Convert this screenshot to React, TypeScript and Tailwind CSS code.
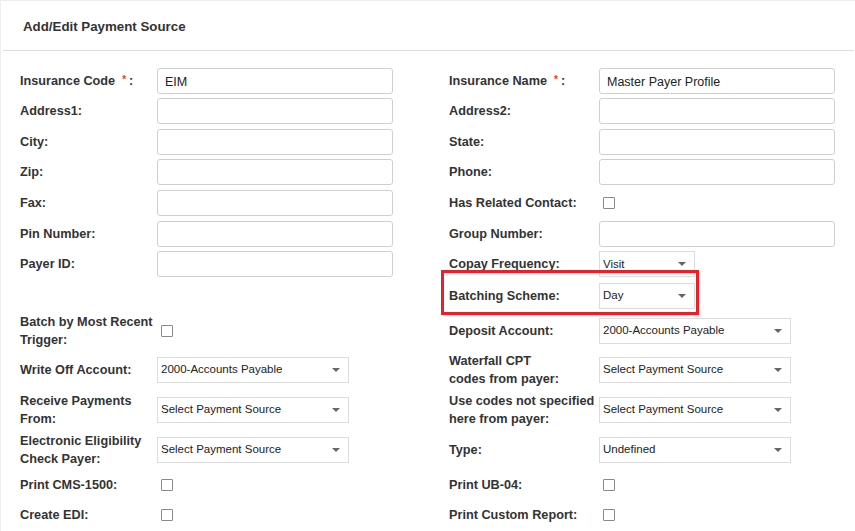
import React from "react";

const font = { fontFamily: '"Liberation Sans", Arial, sans-serif' };

const Label = ({ children, w }: { children: React.ReactNode; w: string }) => (
  <div className={`${w} shrink-0 text-[12.7px] font-bold leading-[18px] text-[#333]`}>{children}</div>
);

const Req = ({ text }: { text: string }) => (
  <>
    {text}
    <span className="ml-[7px] text-[10px] font-bold text-[#e53935] align-[2px]">*</span>
    <span className="ml-[3px]">:</span>
  </>
);

const TextInput = ({ value = "" }: { value?: string }) => (
  <div className="flex h-[26px] w-[236px] items-center rounded-[3px] border border-[#cfcfcf] bg-white px-[7px] pt-[4px] text-[12.5px] text-[#222]">
    {value}
  </div>
);

const Select = ({ value, w }: { value: string; w: string }) => (
  <div className={`${w} flex h-[26px] items-center justify-between border border-[#dcdcdc] bg-white pl-[3px] pr-[8px] text-[11.5px] text-[#222]`}>
    <span>{value}</span>
    <span className="h-0 w-0 border-l-[4px] border-r-[4px] border-t-[4px] border-l-transparent border-r-transparent border-t-[#666]" />
  </div>
);

const Check = () => (
  <div className="ml-[4px] h-[12px] w-[12px] rounded-[1px] border border-[#8a8a8a] bg-white" />
);

type Cell = { label: React.ReactNode; control?: React.ReactNode } | null;

const rows: { h: string; left: Cell; right: Cell; mark?: boolean }[] = [
  {
    h: "h-[31px]",
    left: { label: <Req text="Insurance Code" />, control: <TextInput value="EIM" /> },
    right: { label: <Req text="Insurance Name" />, control: <TextInput value="Master Payer Profile" /> },
  },
  {
    h: "h-[30.5px]",
    left: { label: "Address1:", control: <TextInput /> },
    right: { label: "Address2:", control: <TextInput /> },
  },
  {
    h: "h-[30.5px]",
    left: { label: "City:", control: <TextInput /> },
    right: { label: "State:", control: <TextInput /> },
  },
  {
    h: "h-[30.5px]",
    left: { label: "Zip:", control: <TextInput /> },
    right: { label: "Phone:", control: <TextInput /> },
  },
  {
    h: "h-[31px]",
    left: { label: "Fax:", control: <TextInput /> },
    right: { label: "Has Related Contact:", control: <Check /> },
  },
  {
    h: "h-[30.5px]",
    left: { label: "Pin Number:", control: <TextInput /> },
    right: { label: "Group Number:", control: <TextInput /> },
  },
  {
    h: "h-[30.5px]",
    left: { label: "Payer ID:", control: <TextInput /> },
    right: { label: "Copay Frequency:", control: <Select value="Visit" w="w-[96px]" /> },
  },
  {
    h: "h-[32.5px]",
    left: null,
    right: { label: "Batching Scheme:", control: <Select value="Day" w="w-[96px]" /> },
    mark: true,
  },
  {
    h: "h-[37.5px]",
    left: { label: <>Batch by Most Recent<br />Trigger:</>, control: <Check /> },
    right: { label: "Deposit Account:", control: <Select value="2000-Accounts Payable" w="w-[192px]" /> },
  },
  {
    h: "h-[40px]",
    left: { label: "Write Off Account:", control: <Select value="2000-Accounts Payable" w="w-[192px]" /> },
    right: { label: <>Waterfall CPT<br />codes from payer:</>, control: <Select value="Select Payment Source" w="w-[192px]" /> },
  },
  {
    h: "h-[40px]",
    left: { label: <>Receive Payments<br />From:</>, control: <Select value="Select Payment Source" w="w-[192px]" /> },
    right: { label: <>Use codes not specified<br />here from payer:</>, control: <Select value="Select Payment Source" w="w-[192px]" /> },
  },
  {
    h: "h-[40px]",
    left: { label: <>Electronic Eligibility<br />Check Payer:</>, control: <Select value="Select Payment Source" w="w-[192px]" /> },
    right: { label: "Type:", control: <Select value="Undefined" w="w-[192px]" /> },
  },
  {
    h: "h-[30.5px]",
    left: { label: "Print CMS-1500:", control: <Check /> },
    right: { label: "Print UB-04:", control: <Check /> },
  },
  {
    h: "h-[30px]",
    left: { label: "Create EDI:", control: <Check /> },
    right: { label: "Print Custom Report:", control: <Check /> },
  },
];

export default function App() {
  return (
    <div style={font} className="h-[531px] w-[855px] overflow-hidden border-l border-t border-[#eeeeee] bg-white">
      <div className="ml-[2px] mr-[1px] flex h-[50px] items-center border-b border-[#dddddd] pl-[20px] pt-[2px] text-[13.3px] font-bold text-[#333]">
        Add/Edit Payment Source
      </div>
      <div className="pt-[14px]">
        {rows.map((r, i) => (
          <div key={i} className={`${r.h} grid grid-cols-[428px_1fr]`}>
            <div className="flex items-center pl-[19px]">
              {r.left && (
                <>
                  <Label w="w-[137px]">{r.left.label}</Label>
                  {r.left.control}
                </>
              )}
            </div>
            <div className="relative flex items-center pl-[20px]">
              {r.right && (
                <>
                  <Label w="w-[150px]">{r.right.label}</Label>
                  {r.right.control}
                </>
              )}
              {r.mark && (
                <div className="pointer-events-none absolute left-[12px] top-[-9.5px] h-[45px] w-[258px] border-[3px] border-[#e8202a]" />
              )}
            </div>
          </div>
        ))}
      </div>
    </div>
  );
}
